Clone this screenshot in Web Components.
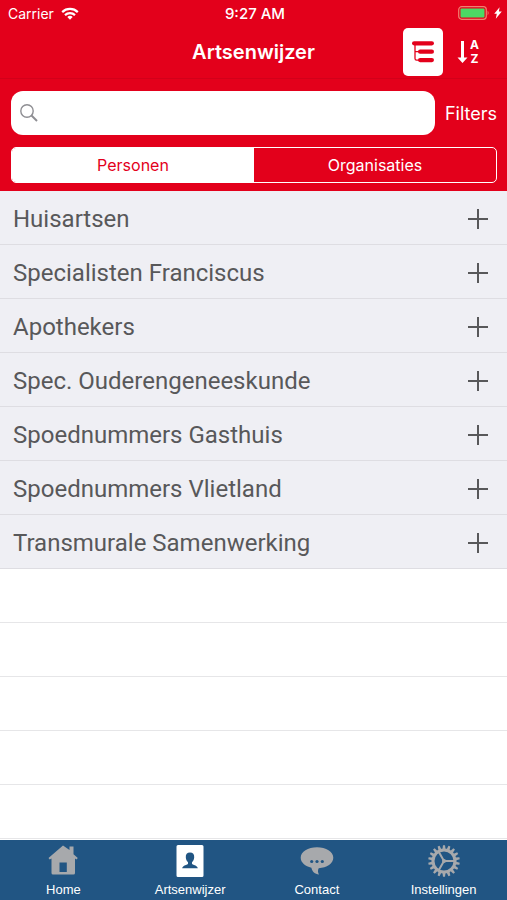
<!DOCTYPE html>
<html lang="nl">
<head>
  <meta charset="UTF-8">
  <meta name="viewport" content="width=device-width, initial-scale=1.0">
  <title>Artsenwijzer</title>
  <style>
    :root {
      --red: #e3001b;
      --blue: #215583;
      --text: #58585a;
      --line: #dedde2;
    }

    body {
      margin: 0;
      font-family: Inter, Roboto, "Liberation Sans", sans-serif;
      color: var(--text);
    }
  </style>
</head>
<body>
  <artsen-app>
    <status-bar slot="top" carrier="Carrier" time="9:27 AM"></status-bar>
    <nav-bar slot="top">Artsenwijzer</nav-bar>
    <search-panel slot="top"></search-panel>

    <category-list>
      <category-row>Huisartsen</category-row>
      <category-row>Specialisten Franciscus</category-row>
      <category-row>Apothekers</category-row>
      <category-row>Spec. Ouderengeneeskunde</category-row>
      <category-row>Spoednummers Gasthuis</category-row>
      <category-row>Spoednummers Vlietland</category-row>
      <category-row>Transmurale Samenwerking</category-row>
    </category-list>

    <tab-bar slot="bottom">
      <tab-item icon="home">Home</tab-item>
      <tab-item icon="person" current>Artsenwijzer</tab-item>
      <tab-item icon="chat">Contact</tab-item>
      <tab-item icon="gear">Instellingen</tab-item>
    </tab-bar>
  </artsen-app>

  <script>
    class BaseElement extends HTMLElement {
      constructor() {
        super()
        this.attachShadow({ mode: 'open' })
      }

      connectedCallback() {
        this.shadowRoot.innerHTML = this.render()
      }
    }

    class ArtsenApp extends BaseElement {
      render() {
        return `
          <style>
            :host {
              display: flex;
              flex-direction: column;
              min-height: 100vh;
            }
            header {
              background: var(--red);
              color: #fff;
            }
            main {
              flex: 1;
              display: flex;
              flex-direction: column;
            }
          </style>
          <header><slot name="top"></slot></header>
          <main><slot></slot></main>
          <slot name="bottom"></slot>
        `
      }
    }

    class StatusBar extends BaseElement {
      render() {
        return `
          <style>
            :host {
              display: grid;
              grid-template-columns: 1fr auto 1fr;
              align-items: center;
              height: 26px;
              padding: 0 5px 0 8px;
              font-size: 14px;
            }
            .left, .right {
              display: flex;
              align-items: center;
              gap: 7px;
            }
            .right {
              justify-content: flex-end;
              gap: 4px;
            }
            .time {
              font-size: 15px;
              font-weight: 500;
            }
            svg {
              display: block;
            }
          </style>
          <span class="left">
            ${this.getAttribute('carrier')}
            <svg width="18" height="13" viewBox="0 0 18 13" fill="none" stroke="#fff" stroke-width="2.2">
              <path d="M1.2 5.1a11.2 11.2 0 0 1 15.6 0"/>
              <path d="M4 8.1a7.2 7.2 0 0 1 10 0"/>
              <path d="M9 12.8 6.3 10.1a3.9 3.9 0 0 1 5.4 0z" fill="#fff" stroke="none"/>
            </svg>
          </span>
          <span class="time">${this.getAttribute('time')}</span>
          <span class="right">
            <svg width="32" height="14" viewBox="0 0 32 14">
              <rect x=".7" y=".7" width="27.6" height="12.6" rx="3" fill="none" stroke="#f08070" stroke-width="1.2"/>
              <rect x="2.5" y="2.5" width="24" height="9" rx="1" fill="#4cd964"/>
              <path d="M29.6 4.6q2 2.4 0 4.8z" fill="#f08070"/>
            </svg>
            <svg width="8" height="12" viewBox="0 0 8 12" fill="#fff">
              <path d="M5.6.2.2 6.8h2.6L1.800 11.800l6-7.200H4.900z"/>
            </svg>
          </span>
        `
      }
    }

    class NavBar extends BaseElement {
      render() {
        return `
          <style>
            :host {
              display: grid;
              grid-template-columns: 1fr auto 1fr;
              align-items: center;
              height: 52px;
              border-bottom: 1px solid #d2001a;
            }
            h1 {
              grid-column: 2;
              margin: 0;
              font-size: 20px;
              font-weight: 600;
            }
            .actions {
              display: flex;
              justify-content: flex-end;
              gap: 14px;
              padding-right: 28px;
            }
            button {
              display: flex;
              align-items: center;
              gap: 2px;
              height: 48px;
              padding: 0;
              border: 0;
              background: none;
              color: #fff;
              font: 700 12px/14px Inter, sans-serif;
            }
            button[aria-pressed="true"] {
              justify-content: center;
              width: 40px;
              border-radius: 5px;
              background: #fff;
              color: var(--red);
            }
            .az {
              display: grid;
            }
          </style>
          <h1><slot></slot></h1>
          <div class="actions">
            <button type="button" aria-pressed="true" aria-label="Groepen">
              <svg width="24" height="24" viewBox="0 0 24 24" fill="currentColor">
                <rect x="1" y="1.2" width="22" height="4.2" rx="2.1"/>
                <rect x="7" y="9.6" width="16" height="4.2" rx="2.1"/>
                <rect x="7" y="18" width="16" height="4.2" rx="2.1"/>
                <path d="M4 4v14.6q0 1.6 1.6 1.6H8M4 11.7h4" fill="none" stroke="currentColor" stroke-width="1.3"/>
              </svg>
            </button>
            <button type="button" aria-pressed="false">
              <svg width="11" height="24" viewBox="0 0 11 24" fill="currentColor">
                <path d="M4 1h3v16.5h3.5L5.5 23 .5 17.5H4z"/>
              </svg>
              <span class="az"><span>A</span><span>Z</span></span>
            </button>
          </div>
        `
      }
    }

    class SearchPanel extends BaseElement {
      render() {
        return `
          <style>
            :host {
              display: block;
              padding: 12px 10px 8px 11px;
            }
            .search {
              display: flex;
              align-items: center;
              gap: 10px;
            }
            .field {
              flex: 1;
              display: flex;
              align-items: center;
              gap: 8px;
              height: 44px;
              padding: 0 9px;
              box-sizing: border-box;
              border-radius: 12px;
              background: #fff;
            }
            input[type="search"] {
              flex: 1;
              min-width: 0;
              border: 0;
              outline: 0;
              background: none;
              font: inherit;
              color: var(--text);
            }
            button {
              padding: 0;
              border: 0;
              background: none;
              color: #fff;
              font: inherit;
              font-size: 18px;
            }
            .segments {
              display: grid;
              grid-template-columns: 1fr 1fr;
              margin-top: 12px;
              border: 1px solid #fff;
              border-radius: 5px;
              overflow: hidden;
            }
            .segments button {
              height: 34px;
              font-size: 16px;
            }
            .segments button[aria-pressed="true"] {
              background: #fff;
              color: var(--red);
            }
          </style>
          <div class="search">
            <label class="field">
              <svg width="18" height="18" viewBox="0 0 18 18" fill="none" stroke="#8e8e93">
                <circle cx="7" cy="7" r="6.2" stroke-width="1.4"/>
                <path d="M11.5 11.5 17 17" stroke-width="2"/>
              </svg>
              <input type="search" aria-label="Zoeken">
            </label>
            <button type="button">Filters</button>
          </div>
          <div class="segments">
            <button type="button" aria-pressed="true">Personen</button>
            <button type="button" aria-pressed="false">Organisaties</button>
          </div>
        `
      }
    }

    class CategoryList extends BaseElement {
      render() {
        return `
          <style>
            :host {
              flex: 1;
              display: flex;
              flex-direction: column;
            }
            /* empty rows below the last category */
            .rest {
              flex: 1;
              background: repeating-linear-gradient(#fff 0 53px, #e6e6e8 53px 54px);
            }
          </style>
          <slot></slot>
          <div class="rest"></div>
        `
      }
    }

    class CategoryRow extends BaseElement {
      render() {
        return `
          <style>
            :host {
              display: block;
              background: #efeff4;
              border-bottom: 1px solid var(--line);
            }
            button {
              display: flex;
              align-items: center;
              justify-content: space-between;
              width: 100%;
              height: 53px;
              padding: 2px 19px 0 13px;
              border: 0;
              background: none;
              color: inherit;
              font: 24px Roboto, sans-serif;
            }
          </style>
          <button type="button" aria-expanded="false">
            <slot></slot>
            <svg width="20" height="20" viewBox="0 0 20 20" stroke="currentColor" stroke-width="2">
              <path d="M10 0v20M0 10h20"/>
            </svg>
          </button>
        `
      }
    }

    class TabBar extends BaseElement {
      render() {
        return `
          <style>
            :host {
              display: block;
              background: var(--blue);
            }
            nav {
              display: grid;
              grid-template-columns: repeat(4, 1fr);
            }
          </style>
          <nav><slot></slot></nav>
        `
      }
    }

    // one tooth every 20 degrees around the gear
    const teeth = Array.from({ length: 18 }, (_, i) =>
      `<path d="M14.400 4.600 15 .2h2l.6 4.400z" transform="rotate(${i * 20} 16 16)"/>`
    ).join('')

    const icons = {
      home: `
        <path fill-rule="evenodd" d="M16 .5 1.500 13l1.200 1.500 1.800-1V28q0 1.500 1.500 1.500h20.500q1.500 0 1.500-1.500V13.500l1.500 1 1.300-1.500-4.300-3.700V1.500h-4v3.600zM12.500 17.500h7.300v9.500h-7.300z"/>`,
      person: `
        <path fill-rule="evenodd" d="M4 0h24q1.500 0 1.500 1.500v29q0 1.500-1.500 1.500H4q-1.500 0-1.500-1.500v-29Q2.500 0 4 0zM16 7.500c-3 0-4.400 2-4.200 4.800.1 2.300 1 3.800 2.200 4.900v1.600c-.5 1.200-5.300 1.600-5.800 4.500h15.600c-.5-2.900-5.300-3.300-5.800-4.500v-1.600c1.200-1.100 2.100-2.600 2.200-4.900.2-2.800-1.200-4.800-4.200-4.800z"/>`,
      chat: `
        <path d="M16 2.300c9 0 16.300 4.500 16.300 10.500 0 5.700-6.500 10-14.600 10.400-1 2.200-1 4 .3 6.300-4-.5-7-3-7.600-6.800C4.200 21.300-.3 17.600-.3 12.800-.3 6.800 7 2.300 16 2.300z"/>
        <g fill="#215583"><circle cx="10.700" cy="16.500" r="1.600"/><circle cx="16" cy="16.500" r="1.600"/><circle cx="21.300" cy="16.500" r="1.600"/></g>`,
      gear: `
        ${teeth}
        <circle cx="16" cy="16" r="11" fill="none" stroke="currentColor" stroke-width="3"/>
        <path d="M16 16h10M16 16l-5-8.700M16 16l-5 8.700" stroke="currentColor" stroke-width="2"/>
        <circle cx="16" cy="16" r="2"/>`
    }

    class TabItem extends BaseElement {
      render() {
        return `
          <style>
            :host {
              display: block;
              color: #a7a9ac;
            }
            :host([current]) {
              color: #fff;
            }
            a {
              display: flex;
              flex-direction: column;
              align-items: center;
              gap: 5px;
              padding: 5px 0 3px;
              color: inherit;
              text-decoration: none;
            }
            svg {
              width: 32px;
              height: 32px;
              overflow: visible;
            }
            span {
              color: #fff;
              font: 13px/15px "Liberation Sans", sans-serif;
            }
          </style>
          <a href="#${this.getAttribute('icon')}">
            <svg viewBox="0 0 32 32" fill="currentColor">${icons[this.getAttribute('icon')]}</svg>
            <span><slot></slot></span>
          </a>
        `
      }
    }

    customElements.define('artsen-app', ArtsenApp)
    customElements.define('status-bar', StatusBar)
    customElements.define('nav-bar', NavBar)
    customElements.define('search-panel', SearchPanel)
    customElements.define('category-list', CategoryList)
    customElements.define('category-row', CategoryRow)
    customElements.define('tab-bar', TabBar)
    customElements.define('tab-item', TabItem)
  </script>
</body>
</html>
